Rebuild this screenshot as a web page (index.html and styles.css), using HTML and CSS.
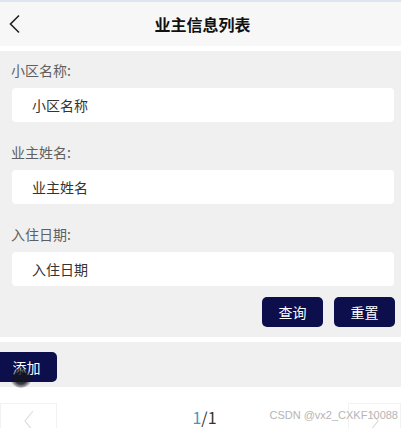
FILE: index.html
```html
<!DOCTYPE html>
<html lang="zh-CN">
<head>
  <meta charset="UTF-8" />
  <meta name="viewport" content="width=device-width, initial-scale=1.0"/>
  <title>业主信息列表</title>
  <link rel="stylesheet" href="styles.css">
</head>
<body>
  <div class="top-strip"></div>
  <header class="nav-bar">
    <span class="back">
      <svg width="14" height="20" viewBox="0 0 14 20"><path d="M11 1.5 L2.5 10 L11 18.5" fill="none" stroke="#222" stroke-width="1.6"/></svg>
    </span>
    <h1>业主信息列表</h1>
  </header>

  <section class="search">
    <div class="field">
      <label>小区名称:</label>
      <div class="input">小区名称</div>
    </div>
    <div class="field">
      <label>业主姓名:</label>
      <div class="input">业主姓名</div>
    </div>
    <div class="field">
      <label>入住日期:</label>
      <div class="input">入住日期</div>
    </div>
    <div class="actions">
      <button class="btn">查询</button>
      <button class="btn">重置</button>
    </div>
  </section>

  <section class="toolbar">
    <button class="btn add">添加</button>
    <span class="touch"></span>
  </section>

  <footer class="pager">
    <span class="page-btn">
      <svg width="12" height="22" viewBox="0 0 12 22"><path d="M10 1 L2 11 L10 21" fill="none" stroke="#ddd" stroke-width="1.2"/></svg>
    </span>
    <span class="page-num"><em>1</em>/1</span>
    <span class="page-btn right">
      <svg width="12" height="22" viewBox="0 0 12 22"><path d="M2 1 L10 11 L2 21" fill="none" stroke="#ddd" stroke-width="1.2"/></svg>
    </span>
    <span class="watermark">CSDN @vx2_CXKF10088</span>
  </footer>
</body>
</html>
```

FILE: styles.css
```css
* {
  box-sizing: border-box;
}

body {
  margin: 0;
  font-family: "Noto Sans CJK SC", "Noto Sans", sans-serif;
  font-size: 14px;
  color: #333;
  background: #fff;
  width: 401px;
  height: 428px;
  overflow: hidden;
}

.top-strip {
  height: 2px;
  background: #dfe4ee;
}

.nav-bar {
  height: 44px;
  background: #f7f7f7;
  display: flex;
  align-items: center;
  justify-content: center;
  position: relative;
  margin-bottom: 5px;
}

.nav-bar h1 {
  margin: 0 0 0 4px;
  font-size: 16px;
  font-weight: bold;
  color: #111;
}

.back {
  position: absolute;
  left: 8px;
  top: 12px;
  display: flex;
}

.search {
  background: #f0f0f0;
  padding: 9px 7px 10px 12px;
}

.field {
  margin-bottom: 20px;
}

.field:nth-child(3) {
  margin-bottom: 11px;
}

.field label {
  display: block;
  line-height: 20px;
  margin: 0 0 8px -1px;
  color: #5f5f5f;
}

.input {
  height: 34px;
  background: #fff;
  border-radius: 4px;
  padding-left: 20px;
  line-height: 34px;
  color: #333;
}

.actions {
  display: flex;
  justify-content: flex-end;
  gap: 11px;
  margin-right: -1px;
}

.btn {
  width: 61px;
  height: 30px;
  border: none;
  border-radius: 5px;
  background: #0c0f4c;
  color: #fff;
  font-family: inherit;
  font-size: 14px;
  padding: 0;
}

.toolbar {
  margin-top: 5px;
  background: #f0f0f0;
  height: 45px;
  padding-top: 10px;
  position: relative;
}

.add {
  width: 57px;
  padding-right: 4px;
  border-radius: 0 5px 5px 0;
}

.touch {
  position: absolute;
  left: 10px;
  top: 26px;
  width: 22px;
  height: 20px;
  border-radius: 50%;
  background: radial-gradient(circle, rgba(20, 20, 30, 0.85) 40%, rgba(20, 20, 30, 0) 75%);
}

.pager {
  position: relative;
  height: 41px;
  display: flex;
  justify-content: space-between;
  align-items: flex-end;
}

.page-btn {
  width: 57px;
  height: 25px;
  border: 1px solid #f2f2f2;
  border-bottom: none;
  display: flex;
  justify-content: center;
  padding-top: 6px;
  overflow: hidden;
}

.page-btn.right {
  width: 53px;
}

.page-num {
  font-size: 16px;
  color: #333;
  line-height: 18px;
  margin-bottom: 2px;
  padding-left: 4px;
}

.page-num em {
  font-style: normal;
  color: #3a9bc0;
}

.watermark {
  position: absolute;
  right: 3px;
  bottom: 7px;
  font-family: "Liberation Sans", sans-serif;
  font-size: 11px;
  color: #b5b5b5;
}
```
